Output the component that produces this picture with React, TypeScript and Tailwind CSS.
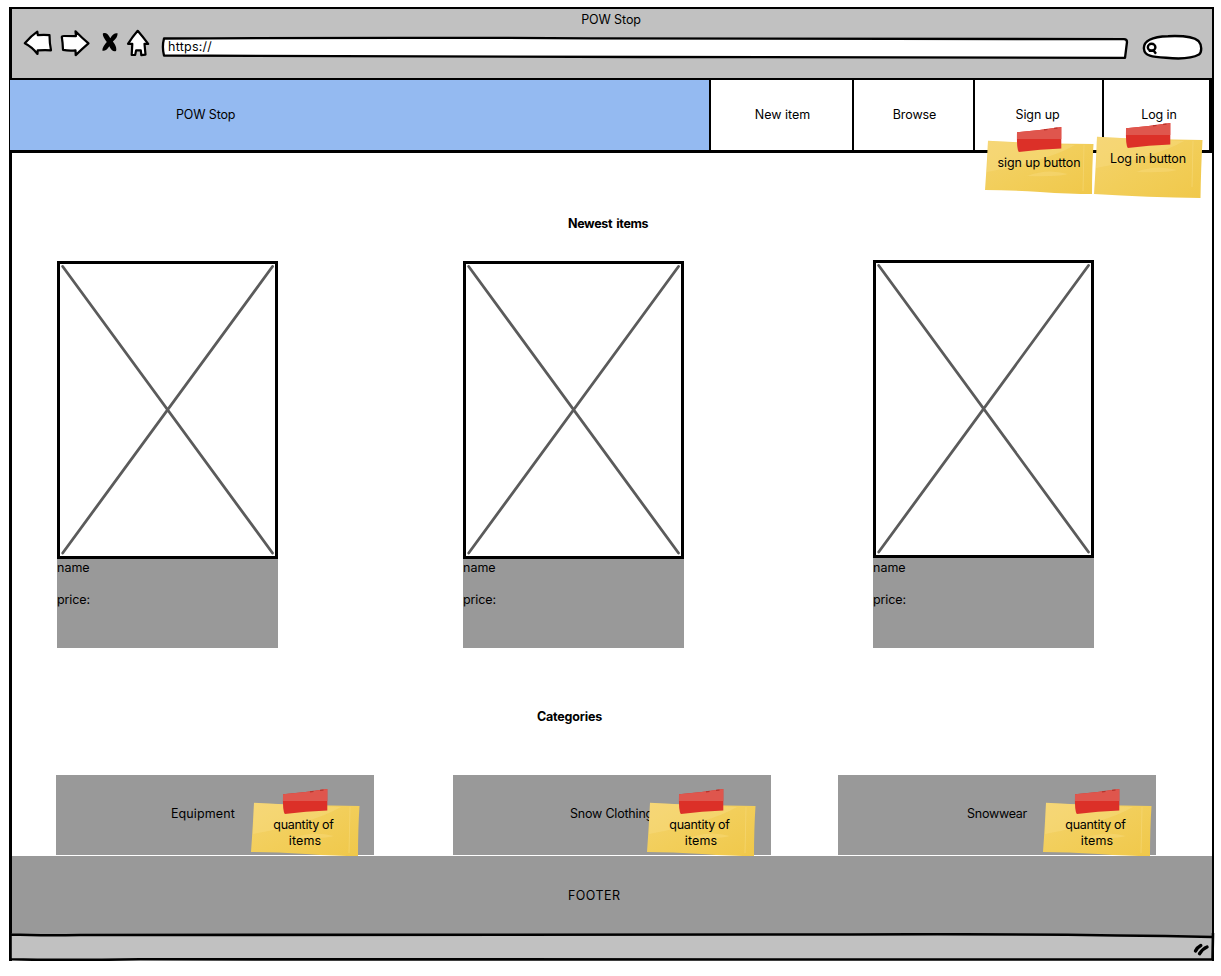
import React from "react";

function BackIcon() {
  return (
    <svg width="30" height="28" viewBox="23 29 30 28" className="block shrink-0" fill="white" stroke="black" strokeWidth="2.2" strokeLinejoin="round">
      <path d="M24.8 43.3 Q31 36 37.3 31.7 L37.8 35.2 Q44 34.5 49.5 35.2 Q49.5 43 51 50.3 Q44 50 37.7 50.4 L37.5 54 Q32 47 24.8 43.3Z" />
    </svg>
  );
}

function ForwardIcon() {
  return (
    <svg width="32" height="28" viewBox="59 29 32 28" className="block shrink-0" fill="white" stroke="black" strokeWidth="2.2" strokeLinejoin="round">
      <path d="M61.8 37 Q61.8 36 64 36 L76 36.1 L75.5 31.3 Q82 38 88.5 43.4 Q82 49 75.7 55.1 L75.5 50.3 Q69 51 63 49.8 Q62.8 43 61.8 37Z" />
    </svg>
  );
}

function StopIcon() {
  return (
    <svg width="18" height="21" viewBox="101 31 18 21" className="block shrink-0">
      <path d="M103 33.3 Q107 31.5 110.3 38.3 Q113.5 32.5 117.5 33.3 Q118 37 112.9 41.6 Q117.3 47.5 116 51 Q112 52.3 109.3 46.3 Q106 51.5 102.5 50.7 Q101.8 47.5 106.8 42 Q102 36 103 33.3Z" />
    </svg>
  );
}

function HomeIcon() {
  return (
    <svg width="25" height="28" viewBox="126 29 25 28" className="block shrink-0" fill="white" stroke="black" strokeWidth="2.2" strokeLinejoin="round">
      <path d="M137.7 30.8 Q142.8 36.8 148.2 43.8 L144.5 43.8 L145.5 54.7 L141.3 55.1 L140.8 50.4 L136.1 50.4 L135.2 54.8 L131.7 55 L132.3 43.9 L128 43.8 Q132.5 36.8 137.7 30.8Z" />
    </svg>
  );
}

function BrowserBar() {
  return (
    <header className="h-[71px] shrink-0 border-b-2 border-black bg-[#c1c1c1]">
      <div className="flex h-[20px] justify-center pr-[2px] pt-[3px] tracking-[-0.1px]">POW Stop</div>
      <div className="flex">
        <div className="flex w-[149px] shrink-0 pl-[11px]">
          <BackIcon />
          <span className="w-[6px]" />
          <ForwardIcon />
          <span className="w-[10px]" />
          <div className="pt-[2px]"><StopIcon /></div>
          <span className="w-[7px]" />
          <HomeIcon />
        </div>
        <div className="relative mt-[7px] h-[24px] w-[968px] shrink-0">
          <svg width="968" height="24" className="absolute inset-0 block" fill="white" stroke="black" strokeWidth="2.3" strokeLinejoin="round">
            <path d="M3 2.5 Q230 1.2 430 2.3 T963 3.2 Q966 3.2 966 6 Q965 14 964 21.8 Q700 21.6 480 21 T3 19.5 Q0.8 11 3 2.5Z" />
          </svg>
          <span className="relative flex pl-[7px] pt-[3px] tracking-[0.25px]">https://</span>
        </div>
        <svg width="62" height="27" viewBox="1141 34 62 27" className="ml-[12px] mt-[5px] block shrink-0" fill="white" stroke="black" strokeWidth="2.4">
          <path d="M1144 49 C1143 41 1152 36.5 1168 36.2 C1184 35.5 1194 37 1198.5 41 C1202 45 1202 52 1199 54.5 C1191 59 1178 59 1166 57.8 C1152 57 1144.5 56 1144 49Z" />
          <ellipse cx="1151.6" cy="47.2" rx="3.8" ry="3.4" />
          <path d="M1153 49.8 L1156 53.7 M1148.8 50.8 L1153.8 50.8" />
        </svg>
      </div>
    </header>
  );
}

function StickyNote({ children, tall }: { children: React.ReactNode; tall?: boolean }) {
  return (
    <div className="relative h-[76px] w-[110px] leading-4">
      <svg width="110" height="76" className="absolute inset-0 block">
        <defs>
          <linearGradient id="paper" x1="0" y1="0" x2="1" y2="1">
            <stop offset="0" stopColor="#f4d36d" />
            <stop offset=".5" stopColor="#f2ce5a" />
            <stop offset="1" stopColor="#f0c84a" />
          </linearGradient>
        </defs>
        <path
          d={tall
            ? "M3 13.8 Q50 16.5 108.5 17 Q107 44 106.5 75 Q55 74.5 0 71 Q2 40 3 13.8Z"
            : "M3 13.8 Q50 16.5 108.5 17 Q107 40 107 67 Q85 67 55 65 T0 63 Q2 35 3 13.8Z"}
          fill="url(#paper)"
        />
        <path d="M3 14 L90 18 Q62 34 2 45Z" fill="#f8df8d" opacity=".35" />
        <path d="M42 49 Q62 41 83 47 Q74 50 42 49Z" fill="#f7da79" opacity=".5" />
        <path d="M99 18 L98 64" stroke="#f7d874" opacity=".7" />
        <path d="M32 5.3 Q54 3.5 76.3 0 L76.3 21.5 Q55 22 33.8 25 Q31.5 22 32 5.3Z" fill="#dc3028" />
        <path d="M32 5.3 Q54 3.5 76.3 0 L76.3 12 L32 12Z" fill="#df564d" />
        <path d="M59 2.9 L62.5 2.4 M69 1.4 L72.5 1.2" stroke="#b9332c" strokeWidth="1.3" />
      </svg>
      <div className="relative flex justify-center pt-[28px] text-center">{children}</div>
    </div>
  );
}

function NavBar() {
  return (
    <nav className="-ml-[2px] -mr-px flex h-[73px] shrink-0 border-b-[3px] border-black">
      <div className="w-[699px] bg-[#94baf1] pl-[166px] pt-[27px] tracking-[-0.15px]">POW Stop</div>
      <div className="flex w-[143px] justify-center border-l-2 border-black pl-[2px] pt-[27px]">New item</div>
      <div className="flex w-[121px] justify-center border-l-2 border-black pl-[2px] pt-[27px] tracking-[-0.1px]">Browse</div>
      <div className="relative flex w-[129px] justify-center border-l-2 border-black pr-[2px] pt-[27px] tracking-[-0.1px]">
        Sign up
        <div className="absolute left-[10px] top-[47px] z-10"><StickyNote><span className="pr-[2px]">sign up button</span></StickyNote></div>
      </div>
      <div className="relative flex grow justify-center border-l-2 border-r-4 border-black pl-[5px] pt-[27px] tracking-[-0.1px]">
        Log in
        <div className="absolute left-[-10px] top-[43px] z-10"><StickyNote tall><span className="pr-[2px]">Log in button</span></StickyNote></div>
      </div>
    </nav>
  );
}

function ItemCard({ raised }: { raised?: boolean }) {
  return (
    <article className="h-[387px] w-[221px] bg-[#999999]">
      <div className="flex h-[299px] flex-col">
        <div className={raised ? "-mt-px h-[298px] shrink-0 border-[3px] border-black bg-white" : "h-[298px] shrink-0 border-[3px] border-black bg-white"}>
          <svg width="215" height="292" className="block" stroke="#5b5b5b" strokeWidth="2.8" strokeLinecap="round">
            <path d="M2.7 2.5 L212.5 289 M212.5 2.5 L2.7 289" />
          </svg>
        </div>
      </div>
      <p className="h-[32px]">name</p>
      <p className="tracking-[-0.1px]">price:</p>
    </article>
  );
}

function CategoryCard({ name, textStyle, noteStyle }: { name: string; textStyle: string; noteStyle: string }) {
  return (
    <section className="relative h-[80px] w-[318px] bg-[#999999] pt-[31px]">
      <h3 className={textStyle}>{name}</h3>
      <div className={noteStyle}>
        <StickyNote><span className="w-[77px] pr-[5px] tracking-[-0.3px]">quantity of <span className="pl-[3px] tracking-[0.1px]">items</span></span></StickyNote>
      </div>
    </section>
  );
}

export default function App() {
  return (
    <div className="h-[976px] w-[1221px] bg-white pl-[9px] pt-[7px] font-['Inter','Liberation_Sans',sans-serif] text-[12.5px] leading-4 text-black">
      <div className="flex h-[954px] w-[1205px] flex-col border-l-[3px] border-r-2 border-t-2 border-black">
        <BrowserBar />
        <NavBar />
        <main className="h-[703px] shrink-0">
          <h2 className="pl-[556px] pt-[63px] font-bold tracking-[-0.35px] [word-spacing:1.5px]">Newest items</h2>
          <div className="flex pl-[45px] pt-[29px]">
            <ItemCard />
            <div className="ml-[185px]"><ItemCard /></div>
            <div className="ml-[189px]"><ItemCard raised /></div>
          </div>
          <h2 className="pl-[525px] pt-[61px] font-bold tracking-[-0.2px]">Categories</h2>
          <div className="flex pl-[44px] pt-[50px]">
            <CategoryCard name="Equipment" textStyle="pl-[115px] tracking-[0.1px]" noteStyle="absolute left-[195px] top-[14px]" />
            <div className="ml-[79px]"><CategoryCard name="Snow Clothing" textStyle="pl-[117px] tracking-[-0.2px]" noteStyle="absolute left-[194px] top-[14px]" /></div>
            <div className="ml-[67px]"><CategoryCard name="Snowwear" textStyle="pl-[129px] tracking-[-0.25px]" noteStyle="absolute left-[205px] top-[14px]" /></div>
          </div>
        </main>
        <footer className="h-[77px] shrink-0 bg-[#999999] pl-[556px] pt-[32px] tracking-[0.45px]">FOOTER</footer>
        <svg width="1206" height="28" viewBox="9 933 1206 28" className="-ml-[3px] block shrink-0">
          <path d="M10 933 L1213 933 L1213 960 L10 960Z" fill="#c1c1c1" />
          <path d="M10 933 L1213 933 L1213 937 Q1050 933.5 850 934.5 L10 934.5Z" fill="#999999" />
          <path d="M10 934.5 Q40 935.7 80 935 L850 934.5 Q1050 933.5 1212 937 M10.5 933 L10.5 959.3 Q60 960.5 140 959.3 L850 959.5 Q1100 958.8 1212.5 959.5 L1213 933" fill="none" stroke="black" strokeWidth="2.6" strokeLinejoin="round" />
          <path d="M1195.5 951 Q1197 947.5 1200.8 945.5 M1199.5 953.7 Q1203 948.5 1207 947" fill="none" stroke="black" strokeWidth="3.4" strokeLinecap="round" />
        </svg>
      </div>
    </div>
  );
}
